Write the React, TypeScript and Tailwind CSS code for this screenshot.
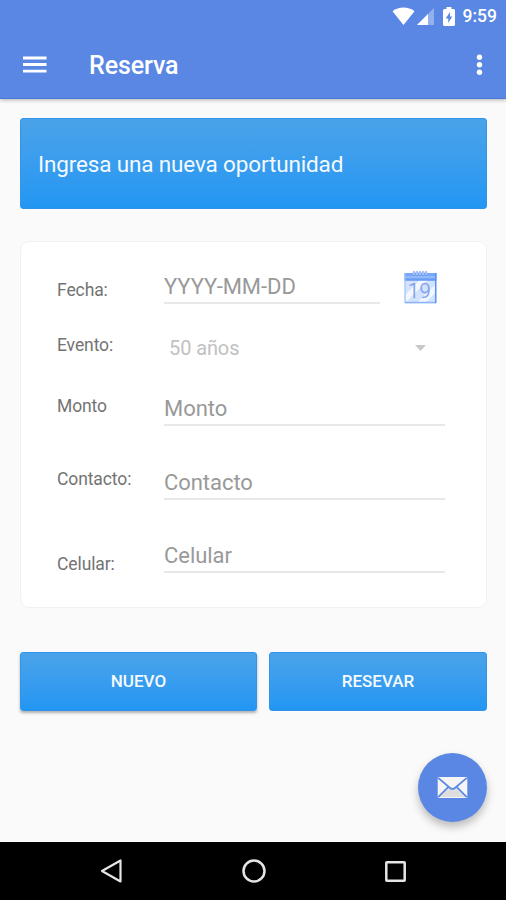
const fields = [
  { label: "Fecha:", hint: "YYYY-MM-DD", row: "mt-5", offset: "pt-[18px]", kind: "date" },
  { label: "Evento:", hint: "50 años", row: "mt-5", offset: "pt-[11px]", kind: "select" },
  { label: "Monto", hint: "Monto", row: "mt-3", offset: "pt-3", kind: "text" },
  { label: "Contacto:", hint: "Contacto", row: "mt-8", offset: "pt-[11px]", kind: "text" },
  { label: "Celular:", hint: "Celular", row: "mt-[31px]", offset: "pt-[23px]", kind: "text" },
];

function StatusBar() {
  return (
    <div className="flex h-8 items-center justify-end pr-[9px] text-white">
      <svg className="h-[18px] w-[23px]" viewBox="0 0 23 18" fill="currentColor">
        <path d="M0.5 4.2C6.5-.6 16.500-.6 22.500 4.200L11.500 18Z" />
      </svg>
      <svg className="ml-[2px] h-[17px] w-[17px]" viewBox="0 0 17 17" fill="currentColor">
        <path d="M17 0V17H0Z" opacity="0.35" />
        <path d="M11 6V17H0Z" />
      </svg>
      <svg className="ml-[9px] h-[19px] w-3" viewBox="0 0 12 19" fill="currentColor">
        <path fillRule="evenodd" d="M3.500 2V0H8.500V2H10.500Q12 2 12 3.500V17.500Q12 19 10.500 19H1.500Q0 19 0 17.500V3.500Q0 2 1.500 2ZM7 5L2.700 11.500H5.300V16L9.300 9.500H7Z" />
      </svg>
      <span className="ml-2 text-[17.500px] leading-8 font-medium">9:59</span>
    </div>
  );
}

function CalendarIcon() {
  return (
    <svg className="h-[33px] w-[33px]" viewBox="0 0 33 33" fill="none">
      <rect x="0.500" y="2" width="32" height="30.500" fill="#d3e3fd" />
      <path d="M2 23L16 9H24L2 31ZM14 31L31 14V22L22 31Z" fill="#f3f8ff" />
      <rect x="0.500" y="2" width="32" height="7.500" fill="#79a8f8" />
      <path d="M1 6H32" stroke="#a9c8fc" />
      <path d="M1 9H32" stroke="#5b8df0" />
      <path d="M1 2V32" stroke="#9fbffb" />
      <path d="M1 31.500H32" stroke="#8db3fa" strokeWidth="1.500" />
      <path d="M31.700 2V32" stroke="#5c91f5" strokeWidth="1.500" />
      <path d="M10 3.500V1.500M13 3.500V1.500M16 3.500V1.500M19 3.500V1.500M22 3.500V1.500" stroke="#6f9af0" strokeWidth="2.500" strokeLinecap="round" />
      <path d="M10 3.500V1.500M13 3.500V1.500M16 3.500V1.500M19 3.500V1.500M22 3.500V1.500" stroke="#dce8ff" strokeLinecap="round" />
      <g fontFamily="Roboto, sans-serif" fontSize="20" fontWeight="300" fill="#7f9cec" stroke="#7f9cec" strokeWidth="0.300">
        <text x="4" y="27">1</text>
        <text x="15.500" y="27">9</text>
      </g>
    </svg>
  );
}

function Header() {
  return (
    <header className="relative z-10 h-[99px] border-b border-[#4779da] bg-[#5a87e3] text-white shadow-[0_1px_4px_rgba(0,0,0,0.3)]">
      <StatusBar />
      <div className="flex h-[66px] items-center px-[23px]">
        <svg className="h-[18px] w-6" viewBox="0 0 24 18" stroke="currentColor" strokeWidth="2.800">
          <path d="M0 2H23.500M0 8.500H23.500M0 15.200H23.500" />
        </svg>
        <h1 className="ml-[42px] pt-[2px] text-[25px] font-medium tracking-[-0.1px]">Reserva</h1>
        <svg className="ml-auto h-[22px] w-[7px]" viewBox="0 0 7 22" fill="currentColor">
          <circle cx="3.500" cy="3.200" r="2.700" />
          <circle cx="3.500" cy="10.700" r="2.700" />
          <circle cx="3.500" cy="18.200" r="2.700" />
        </svg>
      </div>
    </header>
  );
}

export default function App() {
  return (
    <div className="flex h-[900px] w-[506px] flex-col overflow-hidden bg-[#fafafa] font-[Roboto,sans-serif]">
      <Header />

      <main className="relative flex-1 px-5 pt-[19px]">
        <div className="flex h-[91px] w-[467px] items-center rounded-[3px] border border-[#3094ea] bg-linear-to-b from-[#4aa3e9] to-[#2196f3] pt-[3px] pl-[17px] text-[22.500px] tracking-[-0.150px] text-[#f4faff]">
          Ingresa una nueva oportunidad
        </div>

        {/* Booking form */}
        <div className="mt-8 h-[367px] w-[467px] rounded-[9px] border border-[#f1f1f1] bg-white pl-9">
          {fields.map((field) => (
            <div key={field.label} className={`flex ${field.row} ${field.kind === "select" ? "h-[48px]" : "h-[42px]"}`}>
              <span className={`w-[107px] text-[17.500px] leading-5 tracking-[-0.1px] text-[#737373] ${field.offset}`}>{field.label}</span>
              {field.kind === "select" ? (
                <div className="flex w-[281px] items-center pr-[19px] pl-[5px] text-[20px] tracking-[-0.1px] text-[#c1c1c1]">
                  {field.hint}
                  <svg className="ml-auto h-[6px] w-[11px]" viewBox="0 0 11 6" fill="#c9c9c9">
                    <path d="M0 0H11L5.500 6Z" />
                  </svg>
                </div>
              ) : (
                <div className={`border-b-2 border-[#e8e8e8] pt-[10px] text-[22px] leading-[30px] tracking-[-0.050px] text-[#999] ${field.kind === "date" ? "w-[216px]" : "w-[281px]"}`}>
                  {field.hint}
                </div>
              )}
              {field.kind === "date" && (
                <button className="ml-6 flex pt-[9px]">
                  <CalendarIcon />
                </button>
              )}
            </div>
          ))}
        </div>

        <div className="-mr-px mt-11 flex gap-3 text-[17px] font-medium text-[#f4faff]">
          <button className="h-[59px] w-[237px] rounded-[3px] border border-[#3094ea] bg-linear-to-b from-[#4aa3e9] to-[#2196f3] shadow-[0_2px_3px_rgba(0,0,0,0.3)]">NUEVO</button>
          <button className="h-[59px] w-[218px] rounded-[3px] border border-[#3094ea] bg-linear-to-b from-[#4aa3e9] to-[#2196f3]">RESEVAR</button>
        </div>

        {/* Floating mail button */}
        <button className="absolute right-[19px] bottom-5 flex h-[69px] w-[69px] items-center justify-center rounded-full bg-[#5a87e3] shadow-[0_5px_9px_rgba(0,0,0,0.25)]">
          <svg className="h-[21px] w-[31px]" viewBox="0 0 31 22">
            <rect width="31" height="22" rx="1" fill="#f5f5f5" />
            <path d="M2 21L12.500 11L15.500 13.500L18.500 11L29 21Z" fill="#dedede" />
            <path d="M0.500 1L13 11.500Q15.500 13.500 18 11.500L30.500 1M0.500 21L11 10.500M30.500 21L20 10.500" fill="none" stroke="#5a87e3" strokeWidth="1.800" />
          </svg>
        </button>
      </main>

      <nav className="flex h-[58px] items-center justify-between bg-black px-[100px] text-[#e5e5e5]">
        <svg className="h-6 w-[23px]" viewBox="0 0 23 24" fill="none" stroke="currentColor" strokeWidth="2.200" strokeLinejoin="round">
          <path d="M2 12L20.500 1.500V22.500Z" />
        </svg>
        <svg className="h-6 w-6" viewBox="0 0 24 24" fill="none" stroke="currentColor" strokeWidth="2.500">
          <circle cx="12" cy="12" r="10.500" />
        </svg>
        <svg className="h-[21px] w-[21px]" viewBox="0 0 21 21" fill="none" stroke="currentColor" strokeWidth="2.500">
          <rect x="1.300" y="1.300" width="18.400" height="18.400" rx="0.500" />
        </svg>
      </nav>
    </div>
  );
}
